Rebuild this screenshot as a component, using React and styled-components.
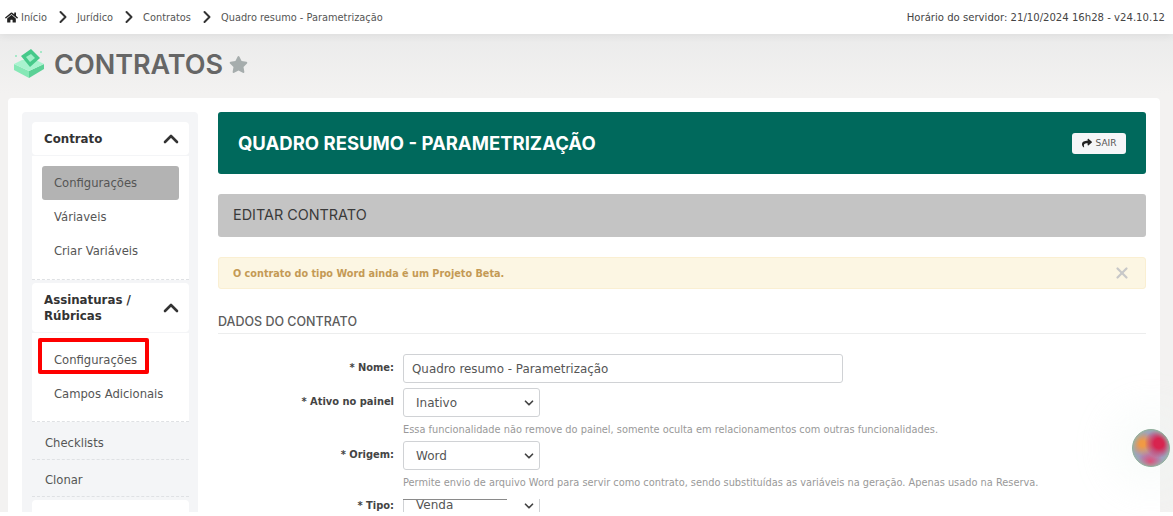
import React from 'react';
import styled, { createGlobalStyle } from 'styled-components';
import { ChevronUp, ChevronDown, ChevronRight, X } from 'lucide-react';
import { FaHome, FaStar, FaShare } from 'react-icons/fa';

const GlobalStyle = createGlobalStyle`
html, body {
  margin: 0;
  padding: 0;
  background: #fff;
}
* { box-sizing: border-box; }
`;

const body = `"DejaVu Sans", Verdana, sans-serif`;
const heading = `Inter, "Liberation Sans", sans-serif`;

const ContractIcon = () => (
  <svg width="32" height="32" viewBox="0 0 32 32">
    <path d="M1 17 L16 24 L16 31 L1 23 Z" fill="#86e8b6" />
    <path d="M16 24 L31 17 L31 22 L16 31 Z" fill="#5bd196" />
    <path d="M1 17 L9 13 L23 13 L31 17 L16 24 Z" fill="#a9f3cf" />
    <path d="M8 9 L18 2 L27 11 L17 20 Z" fill="#46c98a" />
    <path d="M13 10 L18 7 L22 11 L17 15 Z" fill="#a2eec8" />
    <circle cx="28" cy="5" r="1" fill="#8fe6bb" />
    <circle cx="3" cy="9" r="1" fill="#8fe6bb" />
  </svg>
);

const Topbar = styled.header`
  height: 34px;
  background: #fff;
  padding: 0 8px 0 5px;
  display: flex;
  align-items: center;
  justify-content: space-between;
  font-family: ${body};
  font-size: 9.8px;
  color: #444;
  position: relative;
  z-index: 1;
  box-shadow: 0 2px 8px rgba(0, 0, 0, 0.06);
`;

const Crumbs = styled.nav`
  display: flex;
  align-items: center;
`;

const Crumb = styled.span`
  color: #555;
  margin-left: ${p => p.$first ? '3px' : '0'};
`;

const Separator = styled(ChevronRight)`
  margin: 0 4px 0 6px;
  color: #333;
`;

const ServerInfo = styled.span`
  font-size: 10.1px;
  color: #444;
`;

const Page = styled.div`
  height: 478px;
  overflow: hidden;
  background: linear-gradient(#ebebeb, #f3f2f1 60px);
  padding: 0 13px 0 8px;
`;

const TitleRow = styled.div`
  height: 64px;
  padding: 13px 0 0 5px;
  display: flex;
  align-items: flex-start;
`;

const PageTitle = styled.h1`
  margin: 1px 0 0 9px;
  font-family: ${heading};
  font-size: 27px;
  line-height: 34px;
  font-weight: 600;
  color: #666;
`;

const TitleStar = styled(FaStar)`
  margin: 8px 0 0 6px;
  color: #a6adad;
`;

const Card = styled.main`
  height: 414px;
  background: #fff;
  padding: 14px 14px 0 14px;
  display: flex;
  gap: 20px;
  border-radius: 4px 4px 0 0;
`;

const Sidebar = styled.aside`
  width: 176px;
  flex-shrink: 0;
  background: #f4f5f7;
  border-radius: 4px 4px 0 0;
  padding: 10px 9px 0 10px;
`;

const SideHeader = styled.div`
  background: #fff;
  border-radius: 4px;
  padding: 8px 12px;
  height: ${p => p.$tall ? '49px' : '33px'};
  display: flex;
  align-items: center;
  justify-content: space-between;
  font-family: ${body};
  font-size: 11.8px;
  line-height: 16px;
  font-weight: 700;
  color: #333;
`;

const HeaderChevron = styled(ChevronUp)`
  margin-right: -6px;
  color: #333;
`;

const SideBody = styled.div`
  background: #fff;
  margin-top: 1px;
  padding: 10px 10px ${p => p.$tight ? '10px' : '11px'};
  border-bottom: 1px dashed #dfe1e4;
  margin-bottom: ${p => p.$tight ? '1px' : '3px'};
`;

const SideLink = styled.div`
  height: 34px;
  padding: 0 12px;
  display: flex;
  align-items: center;
  border-radius: 3px;
  font-family: ${body};
  font-size: 11.6px;
  white-space: nowrap;
  color: #555;
  background: ${p => p.$active ? '#b3b3b3' : 'transparent'};
`;

const SideItem = styled.div`
  height: 37px;
  padding: 3px 13px 0;
  display: flex;
  align-items: center;
  border-bottom: 1px dashed #dfe1e4;
  font-family: ${body};
  font-size: 11.6px;
  color: #555;
`;

const SideStub = styled.div`
  height: 40px;
  margin-top: 3px;
  background: #fff;
  border-radius: 4px;
`;

const LinkHighlight = styled.div`
  position: relative;
`;

const RedBox = styled.div`
  position: absolute;
  left: -4px;
  top: -5px;
  width: 111px;
  height: 36px;
  border: 4px solid #fe0000;
  border-radius: 2px;
  pointer-events: none;
`;

const Content = styled.section`
  flex: 1;
  min-width: 0;
`;

const Banner = styled.div`
  height: 62px;
  background: #00695c;
  border-radius: 3px;
  padding: 0 20px;
  display: flex;
  align-items: center;
  justify-content: space-between;
`;

const BannerTitle = styled.h2`
  margin: 0;
  font-family: ${heading};
  font-size: 18.5px;
  font-weight: 700;
  color: #fff;
`;

const ExitButton = styled.button`
  width: 54px;
  height: 21px;
  border: 0;
  border-radius: 3px;
  background: #f5f6f8;
  display: flex;
  align-items: center;
  justify-content: center;
  gap: 4px;
  font-family: ${body};
  font-size: 9px;
  color: #555;
  padding: 0;
`;

const SubHeader = styled.div`
  height: 43px;
  margin-top: 20px;
  background: #c4c4c4;
  border-radius: 3px;
  padding: 0 15px 2px;
  display: flex;
  align-items: center;
  font-family: ${heading};
  font-size: 14.4px;
  color: #3a3a3a;
`;

const Notice = styled.div`
  height: 32px;
  margin-top: 20px;
  background: #fcf6e3;
  border: 1px solid #faefd2;
  border-radius: 3px;
  padding: 0 14px 0 14px;
  display: flex;
  align-items: center;
  justify-content: space-between;
  font-family: ${body};
  font-size: 9.7px;
  font-weight: 700;
  color: #c49a55;
`;

const CloseIcon = styled(X)`
  color: #c8c8c8;
`;

const SectionTitle = styled.h3`
  margin: 24px 0 0;
  height: 21px;
  border-bottom: 1px solid #eceded;
  font-family: ${heading};
  font-size: 12.5px;
  line-height: 17px;
  font-weight: 500;
  color: #5c5c5c;
`;

const Fields = styled.div`
  margin-top: 20px;
`;

const Field = styled.div`
  display: grid;
  grid-template-columns: 176px 1fr;
  column-gap: 9px;
  margin-bottom: 5px;
`;

const Label = styled.label`
  font-family: ${body};
  font-size: 9.9px;
  font-weight: 700;
  line-height: 14px;
  padding-top: ${p => p.$raised ? '5px' : '7px'};
  text-align: right;
  color: #444;
`;

const TextInput = styled.div`
  width: 440px;
  height: 29px;
  border: 1px solid #d0d2d5;
  border-radius: 3px;
  padding: 0 8px;
  display: flex;
  align-items: center;
  font-family: ${body};
  font-size: 11.9px;
  color: #555;
`;

const SelectBox = styled.div`
  width: 137px;
  height: 29px;
  border: 1px solid #d0d2d5;
  border-radius: 3px;
  padding: 0 3px 0 12px;
  display: flex;
  align-items: center;
  justify-content: space-between;
  font-family: ${body};
  font-size: 12px;
  color: #555;
`;

/* the last select is cut by the fold of the capture */
const CutSelect = styled(SelectBox)`
  position: relative;
  margin-top: 5px;
  height: 13px;
  border-top: 0;
  border-bottom: 0;
  border-radius: 0;
  align-items: flex-start;
  line-height: 13px;

  &::before {
    content: '';
    position: absolute;
    left: -1px;
    top: 0;
    width: 104px;
    height: 1px;
    background: #8a8a8a;
  }
`;

const Hint = styled.div`
  margin-top: 7px;
  font-family: ${body};
  font-size: 9.8px;
  line-height: 12px;
  color: #999;
  white-space: nowrap;
`;

const Widget = styled.div`
  position: fixed;
  right: 3px;
  top: 429px;
  width: 38px;
  height: 38px;
  border-radius: 50%;
  border: 1px solid #8fb09a;
  box-shadow: 0 0 50px 15px rgba(240, 246, 243, 0.6), inset 0 0 4px 1px rgba(150, 190, 160, 0.8);
  background:
    radial-gradient(circle at 72% 37%, #d8244f 0, #d8244f 14%, transparent 42%),
    radial-gradient(circle at 26% 38%, #f09a45 0, #f09a45 8%, transparent 36%),
    radial-gradient(circle at 48% 88%, #e04d78 0, transparent 34%),
    #a09ac2;
`;

const Select = ({ children }) => (
  <SelectBox>
    {children}
    <ChevronDown size={14} strokeWidth={3} color="#444" />
  </SelectBox>
);

const Separated = ({ children }) => (
  <>
    <Separator size={20} strokeWidth={2.4} />
    <Crumb>{children}</Crumb>
  </>
);

export default function App() {
  return (
    <>
      <GlobalStyle />
      <Topbar>
        <Crumbs>
          <FaHome size={13} color="#222" />
          <Crumb $first>Início</Crumb>
          <Separated>Jurídico</Separated>
          <Separated>Contratos</Separated>
          <Separated>Quadro resumo - Parametrização</Separated>
        </Crumbs>
        <ServerInfo>Horário do servidor: 21/10/2024 16h28 - v24.10.12</ServerInfo>
      </Topbar>
      <Page>
        <TitleRow>
          <ContractIcon />
          <PageTitle>CONTRATOS</PageTitle>
          <TitleStar size={19} />
        </TitleRow>
        <Card>
          <Sidebar>
            <SideHeader>
              Contrato
              <HeaderChevron size={24} strokeWidth={2.6} />
            </SideHeader>
            <SideBody>
              <SideLink $active>Configurações</SideLink>
              <SideLink>Váriaveis</SideLink>
              <SideLink>Criar Variáveis</SideLink>
            </SideBody>
            <SideHeader $tall>
              <span>Assinaturas /<br />Rúbricas</span>
              <HeaderChevron size={24} strokeWidth={2.6} />
            </SideHeader>
            <SideBody $tight>
              <LinkHighlight>
                <SideLink>Configurações</SideLink>
                <RedBox />
              </LinkHighlight>
              <SideLink>Campos Adicionais</SideLink>
            </SideBody>
            <SideItem>Checklists</SideItem>
            <SideItem>Clonar</SideItem>
            <SideStub />
          </Sidebar>
          <Content>
            <Banner>
              <BannerTitle>QUADRO RESUMO - PARAMETRIZAÇÃO</BannerTitle>
              <ExitButton type="button">
                <FaShare size={10} color="#222" />
                SAIR
              </ExitButton>
            </Banner>
            <SubHeader>EDITAR CONTRATO</SubHeader>
            <Notice>
              O contrato do tipo Word ainda é um Projeto Beta.
              <CloseIcon size={18} strokeWidth={3} />
            </Notice>
            <SectionTitle>DADOS DO CONTRATO</SectionTitle>
            <Fields>
              <Field>
                <Label>* Nome:</Label>
                <TextInput>Quadro resumo - Parametrização</TextInput>
              </Field>
              <Field>
                <Label>* Ativo no painel</Label>
                <div>
                  <Select>Inativo</Select>
                  <Hint>Essa funcionalidade não remove do painel, somente oculta em relacionamentos com outras funcionalidades.</Hint>
                </div>
              </Field>
              <Field>
                <Label>* Origem:</Label>
                <div>
                  <Select>Word</Select>
                  <Hint>Permite envio de arquivo Word para servir como contrato, sendo substituídas as variáveis na geração. Apenas usado na Reserva.</Hint>
                </div>
              </Field>
              <Field>
                <Label $raised>* Tipo:</Label>
                <CutSelect>
                  Venda
                  <ChevronDown size={14} strokeWidth={3} color="#444" />
                </CutSelect>
              </Field>
            </Fields>
          </Content>
        </Card>
      </Page>
      <Widget />
    </>
  );
}
